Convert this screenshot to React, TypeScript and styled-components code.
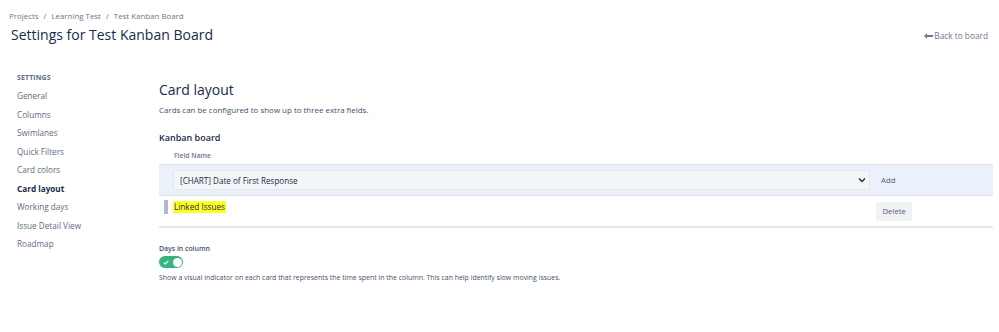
import React from "react";
import styled, { createGlobalStyle } from "styled-components";

const Global = createGlobalStyle`
  html, body { margin: 0; padding: 0; background: #fff; }
  body { font-family: "Open Sans", "Noto Sans", sans-serif; color: #172b4d; }
  * { box-sizing: border-box; }
`;

const Page = styled.div`
  width: 999px;
  height: 332px;
  overflow: hidden;
  display: flex;
  flex-direction: column;
`;

const Header = styled.header`
  display: flex;
  justify-content: space-between;
  align-items: flex-end;
  padding: 10px 11px 0 9px;
`;

const HeaderLeft = styled.div`
  display: flex;
  flex-direction: column;
`;

const Breadcrumbs = styled.nav`
  display: flex;
  gap: 5px;
  font-size: 7.9px;
  color: #6b778c;
  line-height: 12px;
`;

const Title = styled.h1`
  margin: 2px 0 0 2px;
  font-size: 14px;
  font-weight: 500;
  line-height: 22px;
  color: #172b4d;
`;

const BackLink = styled.a`
  display: flex;
  align-items: center;
  gap: 1px;
  font-size: 8.3px;
  color: #6b778c;
  text-decoration: none;
  margin-bottom: 5px;
`;

const Body = styled.div`
  display: flex;
  padding-top: 27px;
`;

const Sidebar = styled.aside`
  width: 159px;
  flex-shrink: 0;
  padding-left: 17px;
  display: flex;
  flex-direction: column;
`;

const SideTitle = styled.div`
  font-size: 7px;
  font-weight: 700;
  color: #5e6c84;
  letter-spacing: 0.1px;
  line-height: 10px;
  margin-bottom: 4px;
`;

const SideItem = styled.a<{ $active?: boolean }>`
  font-size: 8.2px;
  line-height: 18.5px;
  color: ${(p) => (p.$active ? "#172b4d" : "#5e6c84")};
  font-weight: ${(p) => (p.$active ? 700 : 400)};
  text-decoration: none;
`;

const Main = styled.main`
  flex: 1;
  padding-right: 6px;
  display: flex;
  flex-direction: column;
`;

const H2 = styled.h2`
  margin: 6px 0 0;
  font-size: 14px;
  font-weight: 500;
  line-height: 22px;
`;

const Desc = styled.p`
  margin: 3px 0 0;
  font-size: 7.95px;
  line-height: 13px;
  color: #42526e;
`;

const H3 = styled.h3`
  margin: 14px 0 0;
  font-size: 9px;
  font-weight: 600;
  line-height: 14px;
`;

const ColHead = styled.div`
  font-size: 6.8px;
  color: #6b778c;
  font-weight: 600;
  padding-left: 15px;
  margin-top: 6px;
  line-height: 10px;
`;

const Table = styled.div`
  margin-top: 3px;
  display: flex;
  flex-direction: column;
  border-bottom: 2px solid #e4e6ea;
`;

const Row = styled.div<{ $add?: boolean }>`
  display: flex;
  align-items: center;
  height: ${(p) => (p.$add ? "32px" : "30px")};
  background: ${(p) => (p.$add ? "#eaf1fb" : "#fff")};
  border-top: ${(p) => (p.$add ? "1px solid #dfe3ea" : "none")};
  border-bottom: ${(p) => (p.$add ? "1px solid #dfe3ea" : "none")};
  padding-left: 14px;
  gap: 4px;
`;

const SelectBox = styled.div`
  width: 697px;
  height: 20px;
  background: #f4f5f7;
  border: 1px solid #e4e6ea;
  border-radius: 2px;
  display: flex;
  align-items: center;
  justify-content: space-between;
  padding: 0 3px 0 6px;
  font-size: 8.1px;
  color: #172b4d;
`;

const Button = styled.button`
  font-family: inherit;
  font-size: 7.8px;
  color: #505f79;
  background: #f0f2f4;
  border: none;
  border-radius: 2px;
  height: 19px;
  padding: 0 6px;
`;

const AddButton = styled(Button)`
  background: transparent;
  padding: 0 7px;
`;

const DeleteButton = styled(Button)`
  margin-right: 81px;
`;

const Handle = styled.div`
  width: 4px;
  height: 14px;
  margin-left: -9px;
  background-image: radial-gradient(circle at 1px 1px, #b3bac5 0.8px, transparent 0.9px);
  background-size: 2px 2px;
  align-self: flex-start;
  margin-top: 4px;
`;

const Highlight = styled.span`
  background: #ffff20;
  font-size: 8.2px;
  line-height: 12px;
  padding: 0 1px;
  align-self: flex-start;
  margin-top: 5px;
  margin-left: 1px;
`;

const Spacer = styled.div`
  flex: 1;
`;

const Option = styled.div`
  margin-top: 16px;
  display: flex;
  flex-direction: column;
`;

const OptLabel = styled.div`
  font-size: 6.9px;
  font-weight: 600;
  color: #42526e;
  line-height: 10px;
`;

const Toggle = styled.div`
  margin-top: 2px;
  width: 24px;
  height: 12px;
  border-radius: 6px;
  background: #36b37e;
  position: relative;
  display: flex;
  align-items: center;
  padding-left: 4px;
`;

const Knob = styled.div`
  position: absolute;
  right: 1.5px;
  top: 1.5px;
  width: 9px;
  height: 9px;
  border-radius: 50%;
  background: #fff;
`;

const OptDesc = styled.div`
  margin-top: 5px;
  font-size: 6.95px;
  color: #42526e;
  line-height: 10px;
`;

const sideItems = [
  "General",
  "Columns",
  "Swimlanes",
  "Quick Filters",
  "Card colors",
  "Card layout",
  "Working days",
  "Issue Detail View",
  "Roadmap",
];

export default function App() {
  return (
    <Page>
      <Global />
      <Header>
        <HeaderLeft>
          <Breadcrumbs>
            <span>Projects</span>
            <span>/</span>
            <span>Learning Test</span>
            <span>/</span>
            <span>Test Kanban Board</span>
          </Breadcrumbs>
          <Title>Settings for Test Kanban Board</Title>
        </HeaderLeft>
        <BackLink href="#">
          <svg width="9" height="6" viewBox="0 0 9 6">
            <path d="M0 3 L3 0.3 L3 2 L9 2 L9 4 L3 4 L3 5.7 Z" fill="#6b778c" />
          </svg>
          Back to board
        </BackLink>
      </Header>
      <Body>
        <Sidebar>
          <SideTitle>SETTINGS</SideTitle>
          {sideItems.map((s) => (
            <SideItem key={s} $active={s === "Card layout"}>
              {s}
            </SideItem>
          ))}
        </Sidebar>
        <Main>
          <H2>Card layout</H2>
          <Desc>Cards can be configured to show up to three extra fields.</Desc>
          <H3>Kanban board</H3>
          <ColHead>Field Name</ColHead>
          <Table>
            <Row $add>
              <SelectBox>
                <span>[CHART] Date of First Response</span>
                <svg width="8" height="6" viewBox="0 0 8 6">
                  <path d="M1 1.5 L4 4.5 L7 1.5" stroke="#172b4d" strokeWidth="1.4" fill="none" />
                </svg>
              </SelectBox>
              <AddButton>Add</AddButton>
            </Row>
            <Row>
              <Handle />
              <Highlight>Linked Issues</Highlight>
              <Spacer />
              <DeleteButton>Delete</DeleteButton>
            </Row>
          </Table>
          <Option>
            <OptLabel>Days in column</OptLabel>
            <Toggle>
              <svg width="6" height="5" viewBox="0 0 6 5">
                <path d="M0.7 2.6 L2.3 4 L5.3 0.9" stroke="#fff" strokeWidth="1.2" fill="none" />
              </svg>
              <Knob />
            </Toggle>
            <OptDesc>
              Show a visual indicator on each card that represents the time spent in the column. This can help identify slow moving issues.
            </OptDesc>
          </Option>
        </Main>
      </Body>
    </Page>
  );
}
